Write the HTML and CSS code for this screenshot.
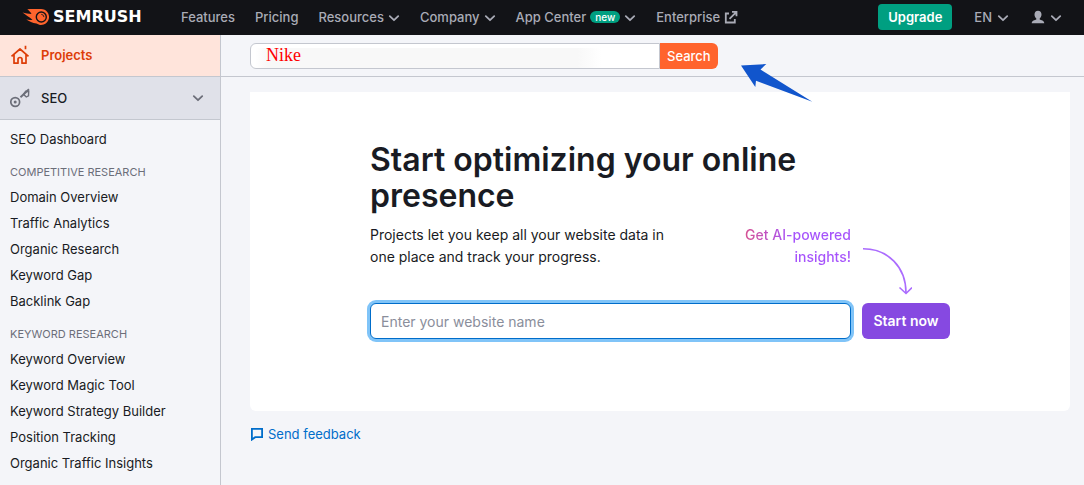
FILE: index.html
```html
<!DOCTYPE html>
<html lang="en">
<head>
<meta charset="utf-8">
<title>Semrush Projects</title>
<link rel="stylesheet" href="styles.css">
</head>
<body>
<svg class="sprite" aria-hidden="true">
  <symbol id="chevron" viewBox="0 0 12 12"><path d="M1.800 4.200 6 8.200l4.200-4" fill="none" stroke="currentColor" stroke-width="1.800" stroke-linecap="round" stroke-linejoin="round"/></symbol>
</svg>
<header class="header">
  <a class="brand" href="#">
    <svg class="brand-mark" viewBox="0 0 28 18" aria-hidden="true">
      <path d="M5.300 1.200C9 .8 14 1 19 1a8 8 0 1 1-4.500 14.600C10.500 15 7 13.500 4.300 11.600c2.400.4 4.400.5 6.200.1C7.500 9.500 3 6.500.5 4.600c2.700.6 6 1.300 9 1.300C8.500 4 7 2.500 5.300 1.200z" fill="#ff642d"/>
      <circle cx="19.300" cy="9" r="5" fill="#ff642d" stroke="#121317" stroke-width="1.400"/>
      <path d="M19.600 6.300a2.500 2.500 0 0 1 2.300 2.400" fill="none" stroke="#121317" stroke-width=".8" stroke-linecap="round"/>
    </svg>
    <span class="brand-name">SEMRUSH</span>
  </a>
  <nav class="nav" aria-label="Main">
    <a href="#">Features</a>
    <a href="#">Pricing</a>
    <a href="#">Resources<svg class="chevron"><use href="#chevron"/></svg></a>
    <a href="#">Company<svg class="chevron"><use href="#chevron"/></svg></a>
    <a href="#">App Center<span class="badge">new</span><svg class="chevron"><use href="#chevron"/></svg></a>
    <a href="#">Enterprise<svg class="external" viewBox="0 0 14 14" aria-hidden="true"><path d="M5 3.500H1.800v9h9V9M8 1.800h4.500v4.500M12 2.300 5.500 8.800" fill="none" stroke="currentColor" stroke-width="1.800"/></svg></a>
  </nav>
  <div class="account">
    <button class="upgrade" type="button">Upgrade</button>
    <button class="menu" type="button">EN<svg class="chevron"><use href="#chevron"/></svg></button>
    <button class="menu" type="button" aria-label="Account"><svg class="user" viewBox="0 0 14 14" aria-hidden="true"><path d="M7 .8c2.200 0 3.500 1.500 3.500 3.600 0 1.700-.8 3.200-1.800 4v1.200c1.500.5 4.300 1 4.600 3.600H.7C1 10.600 3.800 10.100 5.300 9.600V8.400c-1-.8-1.800-2.300-1.800-4C3.500 2.300 4.800.8 7 .8z" fill="currentColor"/></svg><svg class="chevron"><use href="#chevron"/></svg></button>
  </div>
</header>
<div class="layout">
  <aside class="sidebar">
    <a class="side-head side-projects" href="#">
      <svg class="side-icon" viewBox="0 0 20 20" aria-hidden="true"><path d="M1.500 11.300 10 4l8.500 7.300M4 9.800V18.200h4V14.500a2 2 0 0 1 4 0v3.700h4V9.800M15.500.8v3.400" fill="none" stroke="currentColor" stroke-width="1.700" stroke-linejoin="round"/></svg>
      Projects
    </a>
    <a class="side-head side-seo" href="#">
      <svg class="side-icon" viewBox="0 0 20 20" aria-hidden="true"><circle cx="5.200" cy="14" r="4.400" fill="none" stroke="currentColor" stroke-width="1.700"/><circle cx="5.200" cy="14" r="1.500" fill="currentColor"/><path d="M10.500 9.200 19 1.200" fill="none" stroke="currentColor" stroke-width="1.900"/><path d="M13.500 6.300l2.200-3 3 .2-.2 4.300-2.200 1.200z" fill="none" stroke="currentColor" stroke-width="1.400"/></svg>
      SEO
      <svg class="chevron"><use href="#chevron"/></svg>
    </a>
    <nav class="side-nav" aria-label="SEO">
      <a href="#">SEO Dashboard</a>
      <h2>COMPETITIVE RESEARCH</h2>
      <a href="#">Domain Overview</a>
      <a href="#">Traffic Analytics</a>
      <a href="#">Organic Research</a>
      <a href="#">Keyword Gap</a>
      <a href="#">Backlink Gap</a>
      <h2>KEYWORD RESEARCH</h2>
      <a href="#">Keyword Overview</a>
      <a href="#">Keyword Magic Tool</a>
      <a href="#">Keyword Strategy Builder</a>
      <a href="#">Position Tracking</a>
      <a href="#">Organic Traffic Insights</a>
    </nav>
  </aside>
  <main class="main">
    <form class="search">
      <input class="search-input" type="text" value="Nike" aria-label="Search query">
      <button class="search-button" type="button">Search</button>
      <svg class="pointer" viewBox="0 0 74 42" aria-hidden="true"><path d="M1 2.500 26.300 1 20.500 6.500 72.300 38.700 16 17.800 15.300 24z" fill="#1155cc"/></svg>
    </form>
    <div class="content">
      <section class="card">
        <h1>Start optimizing your online presence</h1>
        <div class="intro">
          <p class="lead">Projects let you keep all your website data in one place and track your progress.</p>
          <p class="insights">Get AI-powered insights!</p>
          <svg class="arrow" viewBox="0 0 50 48" aria-hidden="true"><path d="M1 1.800C26 1.800 44 20 44 46M37.500 40.500 44 46.500l6-6" fill="none" stroke="#ab6cfe" stroke-width="1.600"/></svg>
        </div>
        <form class="start">
          <input class="site-input" type="text" placeholder="Enter your website name" aria-label="Website name">
          <button class="start-button" type="button">Start now</button>
        </form>
      </section>
      <a class="feedback" href="#"><svg viewBox="0 0 14 14" aria-hidden="true"><path d="M1.900 1.900h10.200v8.300H5.200L1.900 12.600z" fill="none" stroke="currentColor" stroke-width="1.800"/></svg>Send feedback</a>
    </div>
  </main>
</div>
</body>
</html>
```
FILE: styles.css
```css
* { box-sizing: border-box; }
body {
  margin: 0;
  min-height: 100vh;
  display: flex;
  flex-direction: column;
  background: #f4f5f9;
  color: #191b23;
  font: 13px/20px Inter, "Liberation Sans", sans-serif;
}
h1, h2, p { margin: 0; }
a { color: inherit; text-decoration: none; }
button, input { font: inherit; }
button { border: 0; padding: 0; }
.sprite { position: absolute; width: 0; height: 0; }
.chevron { width: 12px; height: 12px; flex: none; }

.header {
  display: flex;
  align-items: center;
  height: 35px;
  padding: 0 22px 2px;
  background: #121317;
  color: #a9abb6;
  font-weight: 500;
}
.brand { display: flex; align-items: center; gap: 3px; width: 159px; color: #fff; }
.brand-mark { width: 28px; height: 18px; }
.brand-name { font: bold 16px/20px "DejaVu Sans", sans-serif; }
.nav { display: flex; gap: 20px; white-space: nowrap; }
.nav a { display: flex; align-items: center; gap: 4px; }
.nav .chevron, .account .chevron { margin-top: 2px; }
.external { width: 14px; height: 14px; margin-top: 1px; }
.badge {
  padding: 0 5px;
  border-radius: 6px;
  background: #009f81;
  color: #fff;
  font-size: 10px;
  line-height: 12px;
}
.account { display: flex; align-items: center; gap: 22px; margin-left: auto; }
.upgrade {
  height: 26px;
  padding: 0 10px;
  border-radius: 4px;
  background: #009f81;
  color: #fff;
  font-weight: 600;
}
.menu { display: flex; align-items: center; gap: 5px; background: none; color: inherit; }
.user { width: 14px; height: 14px; }

.layout { display: flex; flex: 1; }
.sidebar { width: 221px; flex: none; border-right: 1px solid #c4c7cf; }
.side-head {
  display: flex;
  align-items: center;
  gap: 11px;
  padding: 0 16px 0 10px;
  border-bottom: 1px solid #c4c7cf;
  font-weight: 600;
}
.side-head .chevron { margin-left: auto; color: #6c6e79; }
.side-icon { width: 20px; height: 20px; }
.side-projects { height: 42px; padding-bottom: 2px; background: #ffe4db; color: #dd3d08; }
.side-seo { height: 43px; background: #e0e1e9; font-weight: 500; }
.side-seo .side-icon { color: #6c6e79; }
.side-nav { padding: 6px 0 6px 10px; }
.side-nav a { display: block; line-height: 26px; }
.side-nav h2 {
  margin-top: 8px;
  color: #6c6e79;
  font-size: 11px;
  font-weight: 400;
  line-height: 24px;
}

.main { flex: 1; min-width: 0; }
.search {
  display: flex;
  align-items: center;
  height: 42px;
  padding-left: 29px;
  border-bottom: 1px solid #c4c7cf;
}
.search-input {
  width: 410px;
  height: 26px;
  padding: 0 15px;
  border: 1px solid #c4c7cf;
  border-radius: 6px 0 0 6px;
  background: linear-gradient(90deg, #fff 1%, #f8f8f8 4%, #f8f8f8 80%, #fff 86%) 0 4px no-repeat #fff;
  color: #f00;
  font: 18px/24px "Liberation Serif", serif;
}
.search-button {
  height: 26px;
  padding: 0 7px;
  border-radius: 0 6px 6px 0;
  background: #ff642d;
  color: #fff;
  font-weight: 500;
}
.pointer {
  position: relative;
  top: 28px;
  width: 74px;
  height: 42px;
  margin-left: 22px;
}
.content { padding: 15px 14px 0 29px; }
.card {
  padding: 50px 120px 72px;
  border-radius: 0 0 6px 6px;
  background: #fff;
  font-size: 14px;
}
.card h1 { max-width: 480px; font-size: 32px; font-weight: 600; line-height: 36px; }
.intro { display: flex; align-items: flex-start; margin: 10px 0 8px; line-height: 22px; }
.lead { width: 310px; }
.insights {
  width: 120px;
  margin-left: auto;
  text-align: right;
  font-weight: 500;
  background: linear-gradient(90deg, #d8518e 10%, #a653fb 50%);
  background-clip: text;
  -webkit-background-clip: text;
  color: transparent;
}
.arrow { width: 50px; height: 48px; margin: 23px 38px 0 11px; }
.start { display: flex; gap: 11px; }
.site-input {
  flex: 1;
  min-width: 0;
  height: 36px;
  padding: 0 10px;
  border: 1px solid #006dca;
  border-radius: 6px;
  outline: none;
  box-shadow: 0 0 0 3px #80c4f8;
  background: #fff;
}
.site-input::placeholder { color: #8a8e9b; opacity: 1; }
.start-button {
  width: 88px;
  border-radius: 6px;
  background: #8649e1;
  color: #fff;
  font-weight: 600;
}
.feedback { display: inline-flex; align-items: center; gap: 4px; margin-top: 13px; color: #006dca; }
.feedback svg { width: 14px; height: 14px; }
```
